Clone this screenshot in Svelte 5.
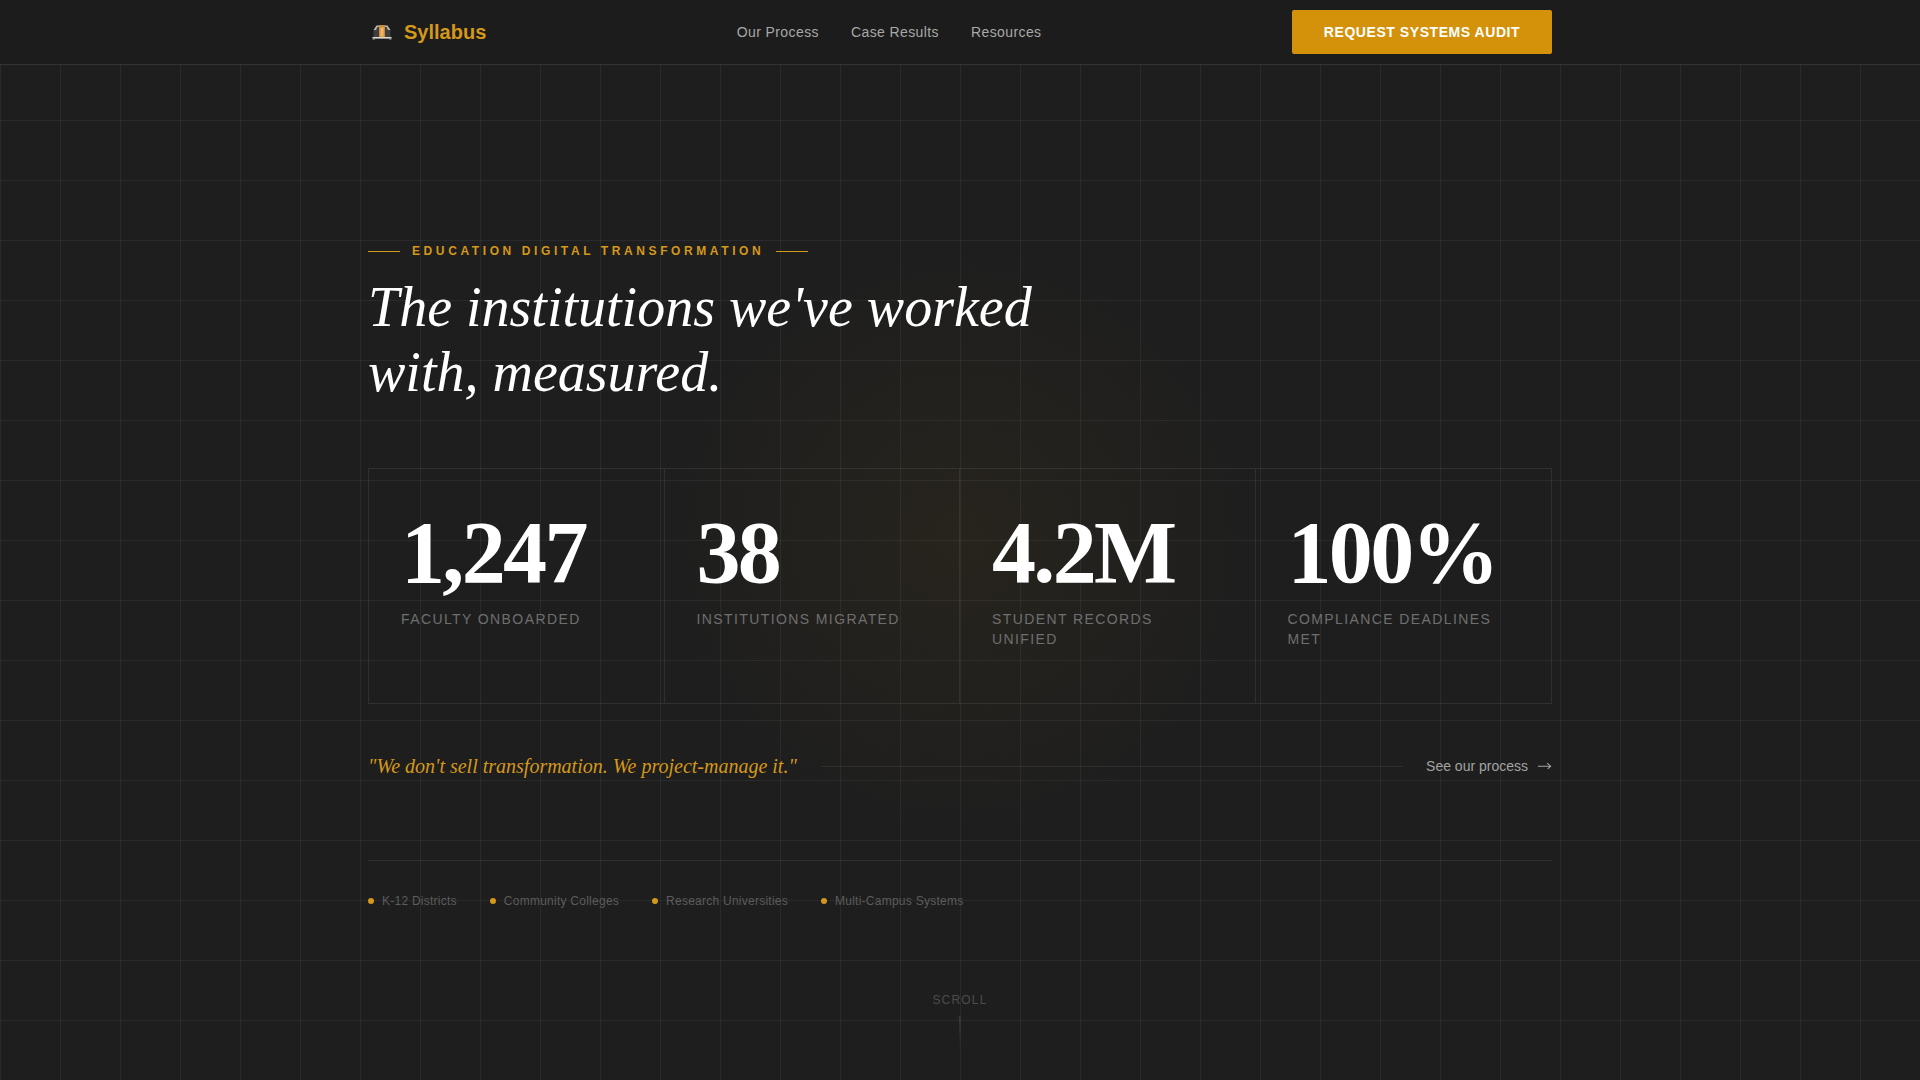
<script>
  const links = ['Our Process', 'Case Results', 'Resources'];
  const stats = [
    { value: '1,247', label: 'Faculty Onboarded' },
    { value: '38', label: 'Institutions Migrated' },
    { value: '4.2M', label: 'Student Records Unified' },
    { value: '100%', label: 'Compliance Deadlines Met' }
  ];
  const tags = ['K-12 Districts', 'Community Colleges', 'Research Universities', 'Multi-Campus Systems'];
</script>

<div class="page">
  <div class="grid"></div>
  <div class="glow"></div>
  <header class="nav">
    <div class="wrap nav-in">
      <a class="logo" href="#top">
        <svg class="logo-icon" viewBox="0 0 20 16" width="20" height="16" aria-hidden="true">
          <path d="M1.5 14 V6 L4.5 1.5 H15.5 L18.5 6 V14Z" fill="#3f3f42"/>
          <path d="M1.5 6 L4.5 1.5 H15.5 L18.5 6 H16 L14.5 3 H5.5 L4 6Z" fill="#b5b3ae"/>
          <rect x="7" y="1" width="6" height="12.5" fill="#c98a3c"/>
          <rect x="8.4" y="3.5" width="3.2" height="9" fill="#f4b562"/>
          <rect x="0.5" y="13" width="19" height="1.6" fill="#dcdad4"/>
          <rect x="0.5" y="14.6" width="2.5" height="1" fill="#8e8e8a"/>
          <rect x="17" y="14.6" width="2.5" height="1" fill="#8e8e8a"/>
        </svg>
        <span>Syllabus</span>
      </a>
      <nav class="links">
        {#each links as l}<a href="#top">{l}</a>{/each}
      </nav>
      <button class="cta">REQUEST SYSTEMS AUDIT</button>
    </div>
  </header>

  <main class="wrap hero">
    <div class="eyebrow"><i></i><span>EDUCATION DIGITAL TRANSFORMATION</span><i></i></div>
    <h1>The institutions we've worked with, measured.</h1>

    <section class="stats">
      {#each stats as s}
        <div class="stat">
          <div class="num">{s.value}</div>
          <div class="label">{s.label}</div>
        </div>
      {/each}
    </section>

    <div class="quote-row">
      <p class="quote">"We don't sell transformation. We project-manage it."</p>
      <div class="rule"></div>
      <a class="process" href="#top">See our process
        <svg viewBox="0 0 16 10" width="15" height="10" aria-hidden="true"><path d="M1 5.2 H14.4 M10.8 2 L14.6 5.2 L11.4 8" fill="none" stroke="#a3a3a3" stroke-width="1.1"/></svg>
      </a>
    </div>

    <div class="tags">
      {#each tags as t}<div class="tag"><b></b>{t}</div>{/each}
    </div>
  </main>

  <div class="scroll"><span>SCROLL</span><i></i></div>
</div>

<style>
  :global(body) { margin: 0; background: #1c1c1c; }
  .page {
    position: relative; width: 100%; height: 1080px; overflow: hidden;
    background: #1e1e1e; font-family: "Liberation Sans", Arial, sans-serif; color: #fff;
  }
  .grid {
    position: absolute; inset: 0;
    background-image:
      linear-gradient(rgba(255,255,255,0.055) 1px, transparent 1px),
      linear-gradient(90deg, rgba(255,255,255,0.055) 1px, transparent 1px);
    background-size: 60px 60px;
  }
  .glow {
    position: absolute; left: 660px; top: 240px; width: 600px; height: 600px;
    background: radial-gradient(circle, rgba(212,145,10,0.05) 0%, transparent 70%);
  }
  .wrap { position: relative; width: 1184px; margin: 0 auto; }
  .nav { position: relative; height: 64px; background: #1c1c1c; border-bottom: 1px solid #333; }
  .nav-in { display: flex; align-items: center; justify-content: space-between; height: 64px; }
  .logo { display: flex; align-items: center; gap: 12px; color: #d4981a; font-size: 20px; font-weight: 700; text-decoration: none; }
  .logo-icon { margin-left: 4px; }
  .links { display: flex; gap: 32px; }
  .links a { color: #a8a8a8; font-size: 14px; letter-spacing: 0.4px; text-decoration: none; }
  .cta {
    width: 260px; height: 44px; border: 0; border-radius: 2px; background: #d4910a; color: #fff;
    font: 700 14px "Liberation Sans", Arial, sans-serif; letter-spacing: 0.56px;
  }
  .hero { padding-top: 179px; }
  .eyebrow {
    display: flex; align-items: center; gap: 12px; color: #d4981a;
    font-size: 12px; font-weight: 700; letter-spacing: 3.6px; line-height: 14px;
  }
  .eyebrow i { width: 32px; height: 1px; background: #d4981a; }
  h1 {
    margin: 17px 0 0; max-width: 720px; color: #fff;
    font: italic 400 56px/65px "Liberation Serif", "Times New Roman", serif;
  }
  .stats {
    display: grid; grid-template-columns: repeat(4, 1fr); height: 236px; margin-top: 63px;
    border: 1px solid rgba(255,255,255,0.08); box-sizing: border-box;
  }
  .stat { padding: 40px 32px; border-right: 1px solid rgba(255,255,255,0.08); }
  .stat:last-child { border-right: 0; }
  .num {
    font: 700 88px/88px "Liberation Serif", "Times New Roman", serif; letter-spacing: -2.64px; color: #fff;
  }
  .label {
    margin-top: 12px; color: #6f6f6f; font-size: 14px; line-height: 20px; letter-spacing: 1.4px; text-transform: uppercase;
  }
  .quote-row { display: flex; align-items: center; gap: 24px; margin-top: 47px; }
  .quote { margin: 0; color: #d4981a; font: italic 400 20px/30px "Liberation Serif", "Times New Roman", serif; white-space: nowrap; }
  .rule { flex: 1; height: 1px; margin-right: -1px; background: rgba(255,255,255,0.07); }
  .process { display: flex; align-items: center; gap: 9px; color: #a3a3a3; font-size: 14px; text-decoration: none; white-space: nowrap; }
  .tags {
    display: flex; gap: 33px; margin-top: 79px; padding-top: 32px; border-top: 1px solid rgba(255,255,255,0.08);
  }
  .tag { display: flex; align-items: center; gap: 8px; color: #5c5c5c; font-size: 12px; line-height: 16px; letter-spacing: 0.25px; }
  .tag b { width: 6px; height: 6px; border-radius: 50%; background: #d4981a; }
  .scroll {
    position: absolute; left: 50%; top: 992px; transform: translateX(-50%);
    display: flex; flex-direction: column; align-items: center; gap: 8px;
    color: #4c4c4c; font-size: 12px; line-height: 16px; letter-spacing: 1.2px;
  }
  .scroll i { width: 1px; height: 30px; background: linear-gradient(#4c4c4c, transparent); }
</style>
